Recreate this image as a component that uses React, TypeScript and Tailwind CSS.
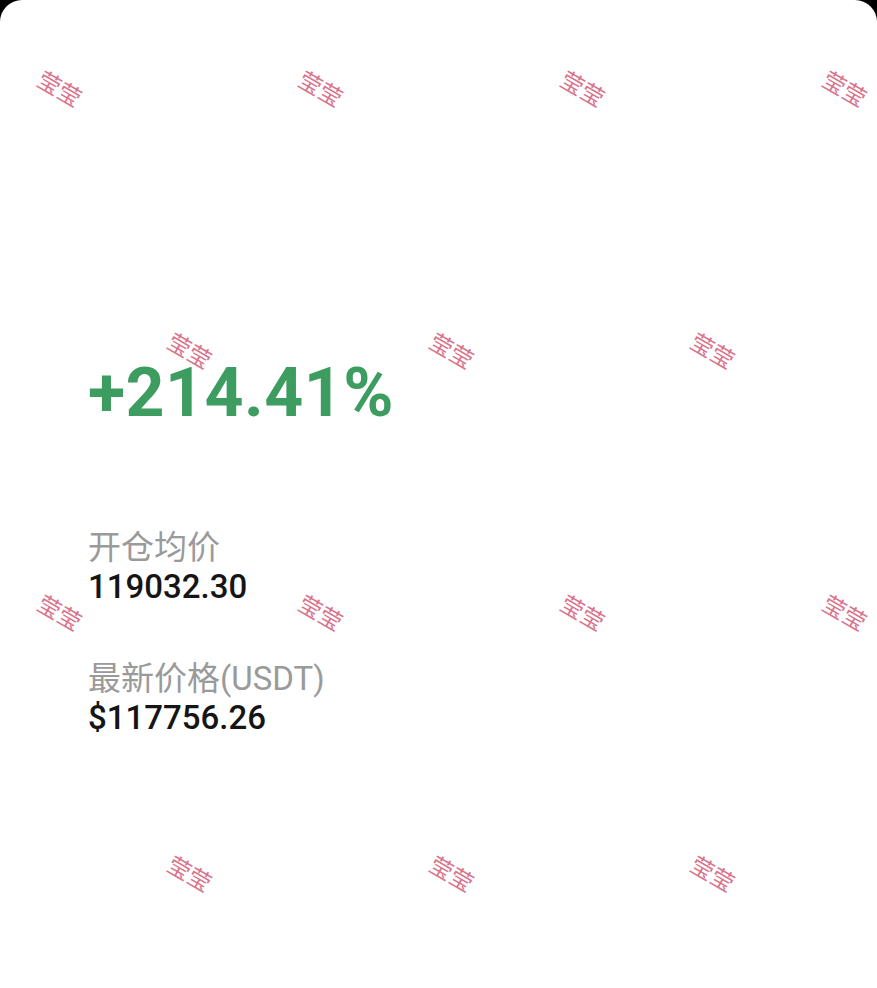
import React from "react";

const marks: { x: number; y: number }[] = [
  { x: 60, y: 88 }, { x: 321, y: 88 }, { x: 583, y: 88 }, { x: 845, y: 88 },
  { x: 190, y: 350 }, { x: 452, y: 350 }, { x: 713, y: 350 },
  { x: 60, y: 612 }, { x: 321, y: 612 }, { x: 583, y: 612 }, { x: 845, y: 612 },
  { x: 190, y: 873 }, { x: 452, y: 873 }, { x: 713, y: 873 },
];

export default function App() {
  return (
    <div className="w-[877px] h-[988px] bg-black overflow-hidden">
      <div
        className="relative w-full h-full bg-white rounded-t-[22px] overflow-hidden pl-[88px] pt-[354px]"
        style={{ fontFamily: "Roboto, 'Noto Sans CJK SC', sans-serif" }}
      >
        <div className="text-[68px] leading-[78px] font-bold text-[#3d9c60] tracking-[0.5px]">
          +214.41%
        </div>
        <div className="mt-[96px] flex flex-col">
          <div className="text-[33px] leading-[40px] text-[#9a9a9a]">开仓均价</div>
          <div className="text-[33px] leading-[38px] font-medium text-[#151515]">119032.30</div>
        </div>
        <div className="mt-[53px] flex flex-col">
          <div className="text-[33px] leading-[40px] text-[#9a9a9a]">最新价格(USDT)</div>
          <div className="text-[33px] leading-[38px] font-medium text-[#151515]">$117756.26</div>
        </div>
        {marks.map((m, i) => (
          <div
            key={i}
            className="absolute whitespace-nowrap text-[23px] leading-none text-[#d8748c] pointer-events-none select-none"
            style={{
              left: m.x,
              top: m.y,
              transform: "translate(-50%, -50%) rotate(30deg)",
              fontFamily: "'Noto Sans CJK SC', sans-serif",
            }}
          >
            莹莹
          </div>
        ))}
      </div>
    </div>
  );
}
